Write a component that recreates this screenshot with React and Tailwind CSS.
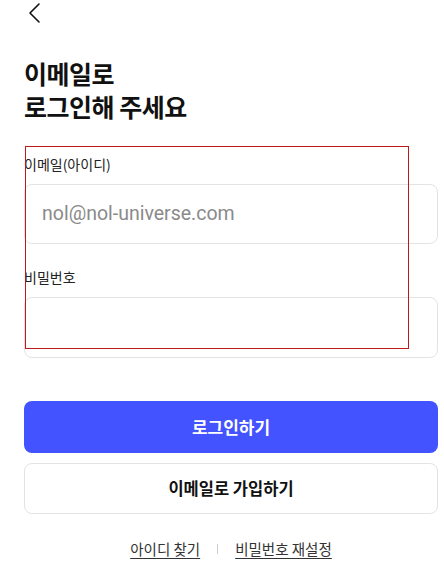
export default function App() {
  return (
    <div
      className="relative min-h-[579px] w-[444px] bg-white pl-6 pr-[6px] text-[#111]"
      style={{ fontFamily: '"Noto Sans CJK KR", "Noto Sans", sans-serif' }}
    >
      <div className="flex h-[26px] items-center">
        <svg width="14" height="22" viewBox="0 0 14 22" fill="none" className="ml-[3px]">
          <path d="M12 2 L3 11 L12 20" stroke="#111" strokeWidth="1.6" strokeLinecap="round" strokeLinejoin="round" />
        </svg>
      </div>

      <h1 className="mt-[31px] text-[25px] font-bold leading-[33px] tracking-[-0.5px]">
        이메일로
        <br />
        로그인해 주세요
      </h1>

      <div className="mt-[31px]">
        <label className="block text-[14px] leading-[20px] text-[#222]">이메일(아이디)</label>
        <div className="mt-[10px] flex h-[60px] items-center rounded-[8px] border border-[#e3e3e3] px-[17px]">
          <span
            className="text-[19.5px] text-[#8a8a8a]"
            style={{ fontFamily: '"Roboto", "Noto Sans", sans-serif' }}
          >
            nol@nol-universe.com
          </span>
        </div>
      </div>

      <div className="mt-[23px]">
        <label className="block text-[14px] leading-[20px] text-[#222]">비밀번호</label>
        <div className="mt-[10px] h-[61px] rounded-[8px] border border-[#e3e3e3]" />
      </div>

      <button className="mt-[43px] flex h-[52px] w-full items-center justify-center rounded-[8px] bg-[#4353ff] text-[17px] font-bold text-white">
        로그인하기
      </button>
      <button className="mt-[10px] flex h-[51px] w-full items-center justify-center rounded-[8px] border border-[#e3e3e3] text-[16.5px] font-bold text-[#111]">
        이메일로 가입하기
      </button>

      <div className="mt-[24px] flex items-center justify-center gap-[17px] text-[14.5px] text-[#333]">
        <a className="underline underline-offset-[3px]">아이디 찾기</a>
        <span className="h-[10px] w-px bg-[#ccc]" />
        <a className="underline underline-offset-[3px]">비밀번호 재설정</a>
      </div>

      <div className="pointer-events-none absolute left-[25px] top-[146px] h-[203px] w-[384px] border border-[#c01818]" />
    </div>
  );
}
